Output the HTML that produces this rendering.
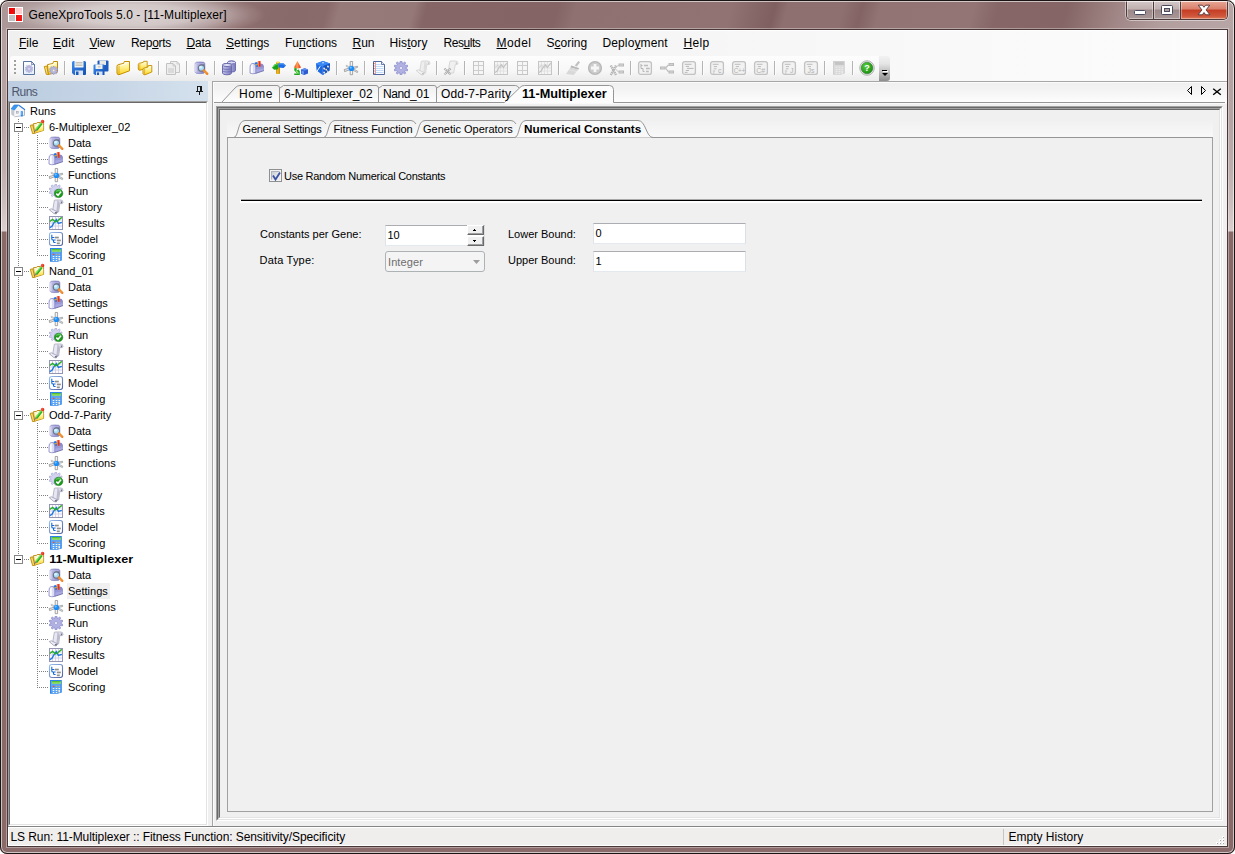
<!DOCTYPE html><html><head><meta charset="utf-8"><title>GeneXproTools 5.0 - [11-Multiplexer]</title><style>html,body{margin:0;padding:0;background:#fff;}
body{width:1235px;height:854px;overflow:hidden;position:relative;font-family:"Liberation Sans",sans-serif;}
#win{position:absolute;left:0;top:0;width:1235px;height:854px;border-radius:8px 8px 7px 7px;background:#8a6a6a;overflow:hidden;}
#win:after{content:"";position:absolute;left:0;top:0;width:1233px;height:852px;border:1px solid #1a1414;border-radius:8px 8px 7px 7px;box-shadow:inset 0 0 0 1px rgba(255,255,255,.6);z-index:9;pointer-events:none;}
#frame-top{position:absolute;left:0;top:0;width:1235px;height:30px;background:linear-gradient(105deg,#ad9999 0,#aa9696 2%,#a28c8c 13%,#947676 18.500%,#8b6c6c 21.500%,#896a6a 24%,#8a6b6b 26.5%,#967979 27.5%,#957878 33.5%,#856565 34.500%,#846464 45%,#8f7171 46.500%,#917373 59%,#7f5f5f 62.500%,#8f7070 63.500%,#8f7070 68%,#836363 69.500%,#927474 71%,#937575 78.500%,#866666 80.500%,#856565 86%,#a08585 90%,#b39e9e 94%,#b8a5a5 100%);}
#frame-left{position:absolute;left:0;top:30px;width:8px;height:816px;background:linear-gradient(180deg,#b3a0a0 0,#b6a4a4 90px,#bfaeae 140px,#cdbfbf 175px,#dccfcf 201px,#8a6969 202px,#8a6969 816px);}
#frame-right{position:absolute;left:1227px;top:30px;width:8px;height:816px;background:linear-gradient(180deg,#b3a0a0 0,#b6a4a4 90px,#bfaeae 140px,#cdbfbf 175px,#dccfcf 201px,#8a6969 202px,#8a6969 816px);}
#frame-bottom{position:absolute;left:0;top:846px;width:1235px;height:8px;background:#8a6a6a;}
#appicon{position:absolute;left:8px;top:7px;width:15px;height:15px;background:#fff;}
#appicon i{position:absolute;width:6px;height:6px;}
#appicon .a{left:1px;top:1px;background:#f00000;}
#appicon .b{left:8px;top:1px;background:#ffc8c8;}
#appicon .c{left:1px;top:8px;background:#c0c0c0;}
#appicon .d{left:8px;top:8px;background:#f00000;}
#titleglow{position:absolute;left:4px;top:-8px;width:262px;height:46px;background:radial-gradient(closest-side,rgba(255,255,255,.6) 0,rgba(255,255,255,.52) 45%,rgba(255,255,255,.3) 70%,rgba(255,255,255,.1) 88%,rgba(255,255,255,0) 100%);}
#title{position:absolute;left:28.5px;top:8px;letter-spacing:0.1px;font-size:12px;line-height:15px;color:#000;white-space:nowrap;}
#capbtns{position:absolute;left:1126px;top:1px;width:102px;height:19px;border:1px solid #4d3a3a;border-top:none;border-radius:0 0 5px 5px;box-sizing:border-box;box-shadow:0 0 0 1px rgba(255,255,255,.45);overflow:hidden;}
.cb{position:absolute;top:0;height:18px;box-sizing:border-box;}
.cb.min{left:0;width:27px;background:linear-gradient(180deg,#d4c8c8 0,#c0b0b0 45%,#9c8888 50%,#a99797 100%);border-right:1px solid #4d3a3a;box-shadow:inset 0 0 0 1px rgba(255,255,255,.4);}
.cb.max{left:27px;width:27px;background:linear-gradient(180deg,#d4c8c8 0,#c0b0b0 45%,#9c8888 50%,#a99797 100%);border-right:1px solid #4d3a3a;box-shadow:inset 0 0 0 1px rgba(255,255,255,.4);}
.cb.cls{left:54px;width:46px;background:linear-gradient(180deg,#e8a896 0,#d9806c 45%,#c43c24 50%,#d0583c 85%,#e08060 100%);box-shadow:inset 0 0 0 1px rgba(255,255,255,.35);}
.cb.min i{position:absolute;left:7px;top:9px;width:12px;height:5px;background:#fff;border:1px solid #4a4a5e;box-sizing:border-box;border-radius:1.5px;}
.cb.max i{position:absolute;left:7px;top:4px;width:12px;height:10px;border:1px solid #4a4a5e;box-sizing:border-box;background:#fff;border-radius:1.5px;}
.cb.max i:after{content:"";position:absolute;left:2px;top:2px;width:6px;height:4px;border:1px solid #4a4a5e;box-sizing:border-box;background:#b0a0a0;}
.cb.cls svg{position:absolute;left:15px;top:2px;}
#client{position:absolute;left:8px;top:30px;width:1219px;height:816px;background:#f0f0f0;box-shadow:0 0 0 1px #4a3838,0 0 0 2px rgba(255,255,255,.35);}
#menubar{position:absolute;left:8px;top:30px;width:1219px;height:51px;background:linear-gradient(90deg,#f0f0f0 0,#f1f1f1 20%,#fcfcfc 100%);box-shadow:inset 0 1px 0 #fff,inset 1px 0 0 #fff,inset -1px 0 0 #fff;}
.mi{position:absolute;top:36px;font-size:12px;line-height:15px;color:#000;white-space:nowrap;}
.mi u{text-decoration:underline;}
#tbbg{position:absolute;left:10px;top:56px;width:869px;height:25px;background:linear-gradient(180deg,#fdfdfd 0,#f7f7f7 60%,#ebebeb 100%);border-radius:3px 0 0 0;}
#grip{position:absolute;left:14px;top:60px;width:2px;height:14px;background:repeating-linear-gradient(180deg,#a0a0a0 0,#a0a0a0 2px,transparent 2px,transparent 4px);}
.ti{position:absolute;top:60px;overflow:visible;}
.sep{position:absolute;top:61px;width:1px;height:14px;background:#b4b4b4;box-shadow:1px 0 0 #fdfdfd;}
#tbover{position:absolute;left:879px;top:56px;width:11px;height:25px;background:linear-gradient(180deg,#f2f2f2 0,#e6e6e6 30%,#bdbdbd 65%,#8e8e8e 100%);border-radius:0 3px 3px 0;}
#tbover i{position:absolute;left:3px;top:14px;width:5px;height:1px;background:#000;box-shadow:1px 1px 0 #fff;}
#tbover b{position:absolute;left:3px;top:17px;width:0;height:0;border-left:3px solid transparent;border-right:3px solid transparent;border-top:3px solid #000;}
#runshdr{position:absolute;left:8px;top:81px;width:200px;height:21px;background:linear-gradient(90deg,#bccde1 0,#c6d5e6 50%,#d5e1ed 100%);}
#runshdr span{position:absolute;left:3.5px;top:4px;letter-spacing:-0.6px;font-size:12px;line-height:15px;color:#4e566c;}
#pin{position:absolute;left:188px;top:5px;}
#tree{position:absolute;left:8px;top:101px;width:200px;height:725px;box-sizing:border-box;border:1px solid;border-color:#a0a0a0 #fff #fff #a0a0a0;background:#fff;overflow:hidden;font-size:11px;}
#tree:before{content:"";position:absolute;left:0;top:0;right:0;bottom:0;border:1px solid;border-color:#696969 #e3e3e3 #e3e3e3 #696969;pointer-events:none;}
#treein{position:absolute;left:1px;top:1px;width:196px;height:721px;}
.tr{position:absolute;left:0px;width:190px;height:16px;}
.tr .ic{position:absolute;top:0;}
.tx{position:absolute;top:0;height:16px;line-height:16px;font-size:11px;color:#000;white-space:nowrap;padding:0 1px;}
.tx.bold{font-weight:bold;transform:scaleX(1.145);transform-origin:0 0;}
.tx.sel{background:#f0f0f0;padding-right:2px;}
.vl{position:absolute;width:1px;background:repeating-linear-gradient(180deg,#808080 0,#808080 1px,transparent 1px,transparent 2px);}
.hl{position:absolute;height:1px;background:repeating-linear-gradient(90deg,#808080 0,#808080 1px,transparent 1px,transparent 2px);}
.pm{position:absolute;left:4px;top:4px;width:9px;height:9px;box-sizing:border-box;border:1px solid #848484;background:#fff;}
.pm b{position:absolute;left:1px;top:3px;width:5px;height:1px;background:#000;}
#status{position:absolute;left:8px;top:826px;width:1219px;height:20px;background:#f0eded;border-top:1px solid #858585;border-bottom:1px solid #fff;box-sizing:border-box;box-shadow:inset 0 1px 0 #fff,inset 1px 0 0 #fff;}
#st1{position:absolute;left:10.5px;letter-spacing:-0.09px;top:830px;font-size:12px;line-height:15px;white-space:nowrap;}
#st2{position:absolute;left:1008.5px;top:830px;font-size:12px;line-height:15px;white-space:nowrap;}
#stsep{position:absolute;left:1003px;top:829px;width:1px;height:16px;background:#c8c4c4;}
#gripper{position:absolute;left:1214px;top:834px;}
/* mdi */
#mdi{position:absolute;left:212px;top:81px;width:1015px;height:745px;border:1px solid #a6a6a6;border-right:none;border-bottom:none;box-sizing:border-box;box-shadow:inset 1px 1px 0 #fbfbfb;background:linear-gradient(180deg,#efefef 0,#f2f2f2 6px,#fdfdfd 20px,#fdfdfd 21px,#f0f0f0 22px);}
#mdisunk{position:absolute;left:216px;top:106px;width:1007px;height:715px;box-sizing:border-box;border:1px solid;border-color:#a0a0a0 #fff #fff #a0a0a0;background:#f0f0f0;}
#mdisunk:before{content:"";position:absolute;left:0;top:0;right:0;bottom:0;border:1px solid;border-color:#696969 #e3e3e3 #e3e3e3 #696969;}
#mdisunk:after{content:"";position:absolute;left:1px;top:1px;right:1px;bottom:1px;border:1px solid;border-color:#a0a0a0 #fff #fff #a0a0a0;}
#mdisunk i{position:absolute;left:2px;top:2px;right:2px;bottom:2px;border:1px solid;border-color:#696969 #e3e3e3 #e3e3e3 #696969;}
#tabsvg1{position:absolute;left:212px;top:82px;}
.ot{position:absolute;top:87px;font-size:12px;line-height:15px;white-space:nowrap;color:#000;}
.ot.b{font-weight:bold;}
#navs{position:absolute;left:1185px;top:84px;}
#itabbg{position:absolute;left:227px;top:119px;width:986px;height:19px;background:linear-gradient(180deg,#f0f0f0 0,#f9f9f9 100%);}
#itab{position:absolute;left:227px;top:137px;width:986px;height:675px;box-sizing:border-box;border:1px solid #a0a0a0;background:#f0f0f0;}
#tabsvg2{position:absolute;left:227px;top:118px;}
.it{position:absolute;top:122px;font-size:11px;line-height:15px;white-space:nowrap;color:#000;}
.it.b{font-weight:bold;}
.lb{position:absolute;font-size:11px;line-height:13px;white-space:nowrap;color:#000;}
#chk{position:absolute;left:269px;top:169px;width:13px;height:13px;box-sizing:border-box;border:1px solid #8e8f8f;background:#f4f4f4;}
#chk:before{content:"";position:absolute;left:1px;top:1px;width:9px;height:9px;box-sizing:border-box;border:1px solid;border-color:#aeb3b9 #e9e9ea #e9e9ea #aeb3b9;background:linear-gradient(135deg,#cbcfd5 0,#f6f6f6 100%);}
#chk svg{position:absolute;left:1px;top:1px;}
#hr{position:absolute;left:241px;top:199px;width:961px;height:3px;background:linear-gradient(180deg,#a8a8a8 0,#a8a8a8 1px,#000 1px,#000 2px,#fff 2px,#fff 3px);box-shadow:-1px 1px 0 #fff;}
.tb{position:absolute;box-sizing:border-box;border:1px solid;border-color:#abadb3 #dbdfe6 #e3e9ef #e2e3ea;background:#fff;font-size:11px;}
.tb span{position:absolute;left:1.5px;top:3px;line-height:13px;}
#cmb{position:absolute;left:385px;top:251px;width:100px;height:21px;box-sizing:border-box;border:1px solid #adb2b5;border-radius:3px;background:#f4f4f4;font-size:11px;color:#6d6d6d;}
#cmb span{position:absolute;left:2px;top:4px;letter-spacing:0.1px;line-height:13px;}
#cmb svg{position:absolute;left:87px;top:8px;}
.spb{position:absolute;left:467px;width:17px;height:10px;box-sizing:border-box;border:1px solid;border-color:#fff #696969 #696969 #fff;background:#f0f0f0;box-shadow:inset -1px -1px 0 #a0a0a0;}
.spb svg{position:absolute;left:5px;top:3px;}
</style></head><body>
<svg width="0" height="0" style="position:absolute">
<defs>
<linearGradient id="gFold" x1="0" y1="0" x2="1" y2="1"><stop offset="0" stop-color="#fff6a8"/><stop offset="1" stop-color="#f2c83a"/></linearGradient>
<linearGradient id="gLav" x1="0" y1="0" x2="1" y2="0"><stop offset="0" stop-color="#c4c4ec"/><stop offset=".5" stop-color="#a0a0d8"/><stop offset="1" stop-color="#7878bc"/></linearGradient>
<linearGradient id="gLavV" x1="0" y1="0" x2="0" y2="1"><stop offset="0" stop-color="#e0e0f8"/><stop offset="1" stop-color="#8c8cc8"/></linearGradient>
<linearGradient id="gBlue" x1="0" y1="0" x2="1" y2="1"><stop offset="0" stop-color="#3c8cf0"/><stop offset="1" stop-color="#1450b0"/></linearGradient>
<radialGradient id="gHelp" cx=".4" cy=".35" r=".7"><stop offset="0" stop-color="#5cd040"/><stop offset="1" stop-color="#188a10"/></radialGradient>
<linearGradient id="gGray" x1="0" y1="0" x2="1" y2="1"><stop offset="0" stop-color="#e4e4e4"/><stop offset="1" stop-color="#bdbdbd"/></linearGradient>
<linearGradient id="gFoldV" x1="0" y1="0" x2="0" y2="1"><stop offset="0" stop-color="#fffde8"/><stop offset=".45" stop-color="#fff08c"/><stop offset="1" stop-color="#ffd21c"/></linearGradient>
<linearGradient id="gPost" x1="0" y1="0" x2="1" y2="0"><stop offset="0" stop-color="#c88c08"/><stop offset=".45" stop-color="#f0c028"/><stop offset="1" stop-color="#c08408"/></linearGradient><linearGradient id="gCone" x1="0" y1="0" x2="1" y2="0"><stop offset="0" stop-color="#e84020"/><stop offset=".45" stop-color="#ffa050"/><stop offset="1" stop-color="#e02810"/></linearGradient>
</defs>
<symbol id="g-gear" viewBox="0 0 14 14"><path d="M5.98 1.90 L6.26 0.04 L7.74 0.04 L8.02 1.90 L9.17 2.27 L10.49 0.93 L11.69 1.80 L10.82 3.48 L11.53 4.45 L13.39 4.15 L13.85 5.55 L12.16 6.40 L12.16 7.60 L13.85 8.45 L13.39 9.85 L11.53 9.55 L10.82 10.52 L11.69 12.20 L10.49 13.07 L9.17 11.73 L8.02 12.10 L7.74 13.96 L6.26 13.96 L5.98 12.10 L4.83 11.73 L3.51 13.07 L2.31 12.20 L3.18 10.52 L2.47 9.55 L0.61 9.85 L0.15 8.45 L1.84 7.60 L1.84 6.40 L0.15 5.55 L0.61 4.15 L2.47 4.45 L3.18 3.48 L2.31 1.80 L3.51 0.93 L4.83 2.27Z M5.70 7.00A1.30 1.30 0 1 0 8.30 7.00A1.30 1.30 0 1 0 5.70 7.00Z" fill-rule="evenodd" stroke-linejoin="round"/></symbol>
<symbol id="i-newrun" viewBox="0 0 16 16"><defs><linearGradient id="gPg" x1="0" y1="0" x2="0" y2="1"><stop offset="0" stop-color="#ffffff"/><stop offset="1" stop-color="#e4f0fa"/></linearGradient></defs><path d="M2.500 1.500H10.500L13.500 4.500V14.500H2.500Z" fill="url(#gPg)" stroke="#5a74a4"/><path d="M10.500 1.500V4.500H13.500Z" fill="#5a74a4" stroke="#5a74a4" stroke-width=".6"/><circle cx="11.300" cy="3.600" r=".6" fill="#fff"/><use href="#g-gear" x="4" y="4.700" width="8.200" height="8.200" fill="#b8b8e0" stroke="#a4a4d4" stroke-width=".6"/><circle cx="8.100" cy="8.800" r=".9" fill="#e0e0f4"/></symbol>
<symbol id="i-openrun" viewBox="0 0 16 16"><path d="M4.500 4.600L10 3.500L10.500 1.500H14.500V12L5.200 14.500Z" fill="url(#gFoldV)" stroke="#c08a00" stroke-width="1"/><path d="M1.300 6.500L3.800 6L5.300 14.500L3.300 14.300Z" fill="#fbe27a" stroke="#c08a00" stroke-width=".9"/><path d="M5.500 5.500L10.800 4.400L11.300 2.500H13.500" stroke="#fffef0" stroke-width=".8" fill="none"/><use href="#g-gear" x="6.200" y="6" width="8.800" height="8.800" fill="#b4b4e0" stroke="#8686c4" stroke-width=".7"/><circle cx="10.600" cy="10.400" r="1" fill="#f4f0c0"/></symbol>
<symbol id="i-save" viewBox="0 0 16 16"><path d="M1 2.500q0-1.500 1.500-1.500h11q1.500 0 1.500 1.500v11.500q0 1-1 1h-11l-2-2z" fill="url(#gBlue)"/><rect x="3.500" y="1" width="9" height="6.500" fill="#f4f4f0"/><path d="M4.500 2.500h7M4.500 4h7M4.500 5.500h7" stroke="#b8b8b0" stroke-width=".8"/><rect x="4" y="10.500" width="8" height="4.500" fill="#d8e4f4"/><rect x="5" y="11.500" width="2.500" height="3.500" fill="#1c58b8"/></symbol>
<symbol id="i-saveall" viewBox="0 0 16 16"><path d="M4.500 1.500q0-1 1-1h9q1 0 1 1v9q0 1-1 1h-10z" fill="#1c5cc0"/><rect x="6.500" y=".5" width="6.500" height="4.500" fill="#e8e8e4"/><path d="M.5 5.500q0-1 1-1h9q1 0 1 1v9.500h-9.500l-1.500-1.500z" fill="url(#gBlue)"/><rect x="2.500" y="4.500" width="7" height="4.500" fill="#f0f0ec"/><rect x="5" y="6" width="2.500" height="1.500" fill="#c8c8c8"/><rect x="3" y="11.500" width="6.500" height="3.500" fill="#d8e4f4"/><rect x="4" y="12.500" width="2" height="2.500" fill="#1c58b8"/></symbol>
<symbol id="i-foldery" viewBox="0 0 16 16"><path d="M2 6.200Q2 5 3.200 4.700L8.800 3.300L9.300 1.500H14.500V10.800L4 14.700Q2.200 14.900 2 13Z" fill="url(#gFoldV)" stroke="#c48c00" stroke-width="1"/><path d="M4 5.500V14" stroke="#d8a010" stroke-width=".8"/><path d="M4.800 5.600L9.500 4.300L10 2.500H13.500" stroke="#fffef4" stroke-width=".8" fill="none"/></symbol>
<symbol id="i-folders" viewBox="0 0 16 16"><path d="M1.300 4.500Q1.300 3.500 2.300 3.300L6.300 2.300L6.700 1.300H10.200V7.800L3 10.300Q1.500 10.300 1.300 9Z" fill="url(#gFoldV)" stroke="#c48c00" stroke-width=".9"/><path d="M2.800 4V10" stroke="#d8a010" stroke-width=".7"/><path d="M6 9.300Q6 8.300 7 8.100L11 7L11.400 5.500H14.800V12L8 14.800Q6.200 14.800 6 13.500Z" fill="url(#gFoldV)" stroke="#c48c00" stroke-width=".9"/><path d="M7.600 8.600V14.300" stroke="#d8a010" stroke-width=".7"/></symbol>
<symbol id="i-copy-d" viewBox="0 0 16 16"><path d="M5.500 1.500H12L14.500 4V12.500H5.500Z" fill="#f0f0f0" stroke="#c6c6c6"/><path d="M12 1.500V4H14.500" fill="none" stroke="#c6c6c6" stroke-width=".8"/><path d="M1.500 3.500H8L10.500 6V14.500H1.500Z" fill="#eeeeee" stroke="#c2c2c2"/><path d="M8 3.500V6H10.500" fill="none" stroke="#c2c2c2" stroke-width=".8"/><rect x="3" y="8" width="6" height="5" fill="#dadada"/></symbol>
<symbol id="i-data" viewBox="0 0 16 16"><path d="M2.200 3.200Q2.200 2 7 2T11.800 3.200V12.300Q11.800 13.600 7 13.600T2.200 12.300Z" fill="url(#gLav)"/><path d="M2.200 3.200Q2.200 2 7 2T11.800 3.200V12.300Q11.800 13.600 7 13.600T2.200 12.300Z" fill="none" stroke="#7c7cbc" stroke-width=".7"/><path d="M2.800 3.500V12.300" stroke="#f0f0ff" stroke-width=".9"/><path d="M2.500 3.300Q7 4.600 11.500 3.300" stroke="#c8c8f0" stroke-width=".6" fill="none"/><circle cx="8.400" cy="8" r="3.100" fill="#a4dcf8" stroke="#70707c" stroke-width="1.100"/><circle cx="7.600" cy="7.200" r="1.300" fill="#dcf4ff"/><path d="M10.800 10.400L14.300 13.900" stroke="#f08828" stroke-width="2.300" stroke-linecap="round"/><path d="M11.600 11.400L12.400 10.600M12.800 12.600L13.600 11.800" stroke="#ffd890" stroke-width=".6"/></symbol>
<symbol id="i-db" viewBox="0 0 16 16"><path d="M6.500 2.500q0-1.500 4-1.500t4 1.500v8q0 1.500-4 1.500t-4-1.500z" fill="url(#gLav)" stroke="#7070b0"/><ellipse cx="10.500" cy="2.500" rx="4" ry="1.500" fill="#dcdcf6" stroke="#7070b0"/><path d="M1.500 5q0-1.500 4.500-1.500t4.500 1.500v8q0 1.800-4.500 1.800t-4.500-1.800z" fill="url(#gLav)" stroke="#6c6cac"/><ellipse cx="6" cy="5" rx="4.500" ry="1.500" fill="#e4e4fa" stroke="#6c6cac"/><path d="M1.500 8q0 1.500 4.500 1.500t4.500-1.500M1.500 10.500q0 1.500 4.500 1.500t4.500-1.500" stroke="#6c6cac" fill="none" stroke-width=".8"/></symbol>
<symbol id="i-settings" viewBox="0 0 16 16"><path d="M4.500 3.600H11.500Q15 3.600 15 7.500V10.500L5 13.700Z" fill="#8888c8"/><path d="M5.800 2.400L8.300 2L9.200 7.200H6.500Z" fill="#1c78e0"/><path d="M5.900 4.600L8.800 4.200L8.900 5.100L6.100 5.500Z" fill="#f8c818"/><path d="M8.800 1.200L11.600 .9L11.400 7.400H9.200Z" fill="#f03010"/><path d="M9.100 1.300L9.900 1.200L9.900 7.300H9.200Z" fill="#ff8868"/><path d="M6.600 6.800H15V10.600L6.600 13.400Z" fill="#9898d4"/><path d="M6.600 9.500L15 8.600V10.600L6.600 13.400Z" fill="#a8a8e0"/><path d="M1 8Q1 3.400 3.900 3.400T6.800 8V13.300L3.900 13.800L1 13.100Z" fill="#dcdcf8" stroke="#7c7cbc" stroke-width=".7"/><path d="M1.900 7.500Q2.100 4.400 3.700 4.300V13.200Q2.300 13.100 1.900 12.500Z" fill="#ffffff"/><path d="M6.800 13.300L15 10.600" stroke="#6c6cac" stroke-width=".8"/></symbol>
<symbol id="i-umb" viewBox="0 0 16 16"><rect x="5" y="1.800" width="4" height="12.300" rx="1" fill="url(#gPost)"/><ellipse cx="7" cy="2.600" rx="1.800" ry=".8" fill="#fae060"/><path d="M7.200 3.600V9.200L3.200 9.700L1 7.800L3.400 4.600Z" fill="#18a418"/><path d="M6.800 4.200L3.800 5L2.200 7.300" stroke="#60d860" stroke-width=".9" fill="none"/><path d="M7.400 3.200H12.400L15 5.500L12.600 7.900L7.400 7.400Z" fill="#1c6ce8"/><path d="M8 3.900H12.200L14 5.300" stroke="#5ca4ff" stroke-width=".9" fill="none"/></symbol>
<symbol id="i-shapes" viewBox="0 0 16 16"><path d="M4.400 .9L8 7.600Q4.500 9.300 1 7.600Z" fill="url(#gCone)"/><path d="M1.200 8.200L3.600 8L3.700 10L5.200 10.200L5.300 9L6.800 11.200V15H1.200V13.600H4.200L1.300 10.500Z" fill="#20a820"/><path d="M3 10.500L5.500 13.500" stroke="#90e880" stroke-width="1.200"/><path d="M8 9.600L11.800 8.200L15 9.400V13.600L11.200 15L8 13.800Z" fill="#2c5cd0"/><path d="M8 9.600L11.200 10.800L15 9.400L11.800 8.200Z" fill="#5c8cf0"/><path d="M8.600 10.600L10.800 11.400V14.200L8.600 13.400Z" fill="#6ca0f8"/></symbol>
<symbol id="i-dice" viewBox="0 0 16 16"><path d="M1 3.400L8 1L15 3.400L14.400 10.800L7.600 15L1.600 10.600Z" fill="#1c68e0"/><path d="M1 3.400L8 1L15 3.400L7.800 6.200Z" fill="#3888f4"/><path d="M7.800 6.200L15 3.400L14.400 10.800L7.600 15Z" fill="#1054c8"/><path d="M1 3.400L7.800 6.200L7.600 15" stroke="#4c94f8" stroke-width=".7" fill="none"/><ellipse cx="8" cy="2.700" rx="1" ry=".55" fill="#fff"/><path d="M2.300 10.800L5 6.600" stroke="#fff" stroke-width="1" stroke-linecap="round"/><g fill="#ffe8c0"><ellipse cx="9.200" cy="8.600" rx=".9" ry="1.100" transform="rotate(-25 9.200 8.600)"/><ellipse cx="13" cy="6.600" rx=".9" ry="1.100" transform="rotate(-25 13 6.600)"/><ellipse cx="11.200" cy="9.700" rx=".8" ry="1" transform="rotate(-25 11.200 9.700)"/><ellipse cx="9.200" cy="12.600" rx=".9" ry="1.100" transform="rotate(-25 9.200 12.600)"/><ellipse cx="12.800" cy="11.300" rx=".7" ry=".9" transform="rotate(-25 12.800 11.300)"/></g></symbol>
<symbol id="i-func" viewBox="0 0 16 16"><path d="M7.200 1.500H9.600V14.700H7.200Z" fill="#f4f4f4" stroke="#909090" stroke-width=".8"/><path d="M1.200 9.500L8.500 7.600L8.900 9L1.600 11.600Z" fill="#e8e8e8" stroke="#909090" stroke-width=".8"/><path d="M8 7.800L14.500 6.200L14.700 7.400L8.600 9.200Z" fill="#e8e8e8" stroke="#909090" stroke-width=".7"/><path d="M8.600 8L14.800 11.300L14.400 12.600L8 9.300Z" fill="#e8e8e8" stroke="#909090" stroke-width=".7"/><path d="M3.400 5.200L8.600 8L8 9L3 6.200Z" fill="#e8e8e8" stroke="#a0a0a0" stroke-width=".6"/><circle cx="8.400" cy="8.400" r="2.700" fill="#1e8cf8"/><circle cx="7.700" cy="7.600" r="1.100" fill="#70c0ff"/></symbol>
<symbol id="i-notepad" viewBox="0 0 16 16"><path d="M2.500 1.500H10.500L13.500 4.500V14.500H2.500Z" fill="#fbfcff" stroke="#5468a0"/><path d="M10.500 1.500V4.500H13.500" fill="#e4e8f4" stroke="#4a5a98" stroke-width=".8"/><path d="M5 4.500H9.500M5 6.500H12.500M5 8.500H12.500M5 10.500H12.500M5 12.500H12.500" stroke="#a8ccf4" stroke-width=".7"/><path d="M4.500 2V14" stroke="#f08080" stroke-width=".8"/><path d="M2 3.500H3.500M2 6H3.500M2 8.500H3.500M2 11H3.500M2 13.500H3.500" stroke="#5a4a4a" stroke-width=".8"/></symbol>
<symbol id="i-run" viewBox="0 0 16 16"><use href="#g-gear" x="1" y="1" width="14" height="14" fill="#b0b0e2" stroke="#8484c6" stroke-width=".7"/><circle cx="8" cy="8" r="1.500" fill="#f4f4fc" stroke="#8c8cc8" stroke-width=".5"/></symbol>
<symbol id="i-runok" viewBox="0 0 16 16"><use href="#g-gear" x="1" y="1" width="13.500" height="13.500" fill="#d4d4f0" stroke="#a4a4d4" stroke-width=".7"/><circle cx="10.600" cy="10.400" r="4.200" fill="#1c9c1c" stroke="#107010" stroke-width=".6"/><path d="M7.400 9.500Q10.600 7 13.800 9.500Q13 6.400 10.600 6.400T7.400 9.500Z" fill="#58c858"/><path d="M8.300 10.600L10 12.300L13 8.800" stroke="#fff" stroke-width="1.500" fill="none"/></symbol>
<symbol id="i-hist" viewBox="0 0 16 16"><path d="M6.300 1.600Q6 1 7.500 1H12.600Q15 1 15 3.200Q15 4.600 13.800 4.600H11.800L10.600 13H4.400Z" fill="#e8e8f2" stroke="#9c9cb4" stroke-width=".7"/><path d="M9.400 1.500L8.400 12.800H10.500L11.700 3Z" fill="#bcbcd0"/><path d="M12.600 2.300Q14.200 2.300 14.200 3.400Q14.200 4.400 13 4.300Z" fill="#70708c"/><path d="M1.200 10.600L3.300 9.800L9.600 12.800L8.300 14.900L6 14.600Z" fill="#eeeef6" stroke="#9090a8" stroke-width=".7"/><path d="M7 13L9.500 12.800L8.300 14.700L6.600 14.500Z" fill="#74748c"/></symbol>
<symbol id="i-hist-d" viewBox="0 0 16 16"><path d="M6.300 1.600Q6 1 7.500 1H12.600Q15 1 15 3.200Q15 4.600 13.800 4.600H11.800L10.600 13H4.400Z" fill="#eeeeee" stroke="#cccccc" stroke-width=".7"/><path d="M9.400 1.500L8.400 12.800H10.500L11.700 3Z" fill="#dedede"/><path d="M12.600 2.300Q14.200 2.300 14.200 3.400Q14.200 4.400 13 4.300Z" fill="#c8c8c8"/><path d="M1.200 10.600L3.300 9.800L9.600 12.800L8.300 14.900L6 14.600Z" fill="#f2f2f2" stroke="#c8c8c8" stroke-width=".7"/><path d="M7 13L9.500 12.800L8.300 14.700L6.600 14.500Z" fill="#c6c6c6"/></symbol>
<symbol id="i-histx-d" viewBox="0 0 16 16"><path d="M6.800 1.600Q6.500 1 8 1H12.600Q15 1 15 3.200Q15 4.600 13.800 4.600H12.300L10.600 13H5Z" fill="#f0f0f0" stroke="#cacaca" stroke-width=".7"/><path d="M12.600 2.300Q14.200 2.300 14.200 3.400Q14.200 4.400 13 4.300Z" fill="#c8c8c8"/><path d="M1.500 8.500L7.500 14.500M7.500 8.500L1.500 14.500" stroke="#b0b0b0" stroke-width="2.400" stroke-dasharray="1.200 .7"/></symbol>
<symbol id="i-grid-d" viewBox="0 0 16 16"><rect x="2.500" y="1.500" width="10" height="13" fill="#f6f6f6" stroke="#c4c4c4"/><path d="M7.500 2V14M3 5.500H12M3 10.500H12" stroke="#cecece"/></symbol>
<symbol id="i-chart-d" viewBox="0 0 16 16"><rect x="1.500" y="1.500" width="13" height="13" fill="#f4f4f4" stroke="#c6c6c6"/><path d="M4.500 2V14M7.500 2V14M10.500 2V14M2 5H14M2 8H14M2 11H14" stroke="#dedede" stroke-width=".8"/><path d="M1.800 12.600L4 11.300L6 7.600L8.400 4.600L10.400 7.500L13.800 3" stroke="#c0c0c0" stroke-width="1.100" fill="none"/><path d="M1.800 7.500L4.600 5.500L7.600 7.500L10 5.500" stroke="#cacaca" stroke-width=".9" fill="none"/></symbol>
<symbol id="i-res" viewBox="0 0 16 16"><rect x="1.500" y="1.500" width="13" height="13" fill="#fafaff" stroke="#9494b4"/><path d="M4.500 2V14M7.500 2V14M10.500 2V14M2 5H14M2 8H14M2 11H14" stroke="#d0d0e4" stroke-width=".9"/><path d="M1.800 12.600L4 11.300L6 7.600L8.400 4.600L10.400 8.500L13.800 7.400" stroke="#1c78e0" stroke-width="1.400" fill="none"/><path d="M1.800 6.500L4.600 4.500L7.600 7L10 5.500L13.800 2.400" stroke="#28b020" stroke-width="1.400" fill="none"/></symbol>
<symbol id="i-brush-d" viewBox="0 0 16 16"><path d="M13.300 1L15 2.300L11.800 6.600L9.800 5.400Z" fill="#c0c0c0"/><path d="M6.200 5.600L14 8L13.300 9.800L5.400 7.400Z" fill="#b8b8b8"/><path d="M5.400 7.400L13.300 9.800L8.600 15L1 14Z" fill="#d8d8d8"/><path d="M4 9.800L11.800 11.600" stroke="#e8e8e8" stroke-width=".8"/></symbol>
<symbol id="i-plus-d" viewBox="0 0 16 16"><circle cx="8" cy="8" r="6.400" fill="#cccccc" stroke="#b8b8b8" stroke-width="1.400"/><path d="M8 4V12M4 8H12" stroke="#f6f6f6" stroke-width="2.800"/></symbol>
<symbol id="i-xtree-d" viewBox="0 0 16 16"><path d="M1.800 5.500L7 15M7 5.500L1.800 15" stroke="#b4b4b4" stroke-width="2.400" stroke-dasharray="1.300 .6"/><path d="M6.500 8L9.500 5M6.500 9L9.500 12" stroke="#c0c0c0" stroke-width="1"/><rect x="9.500" y="3.500" width="5.500" height="3" fill="#b8b8b8"/><rect x="9.500" y="10.500" width="5.500" height="3" fill="#b8b8b8"/><rect x="10.500" y="4.300" width="3.500" height="1.400" fill="#d0d0d0"/><rect x="10.500" y="11.300" width="3.500" height="1.400" fill="#d0d0d0"/></symbol>
<symbol id="i-tree-d" viewBox="0 0 16 16"><rect x="1.600" y="1.600" width="12.800" height="12.800" rx="2.200" fill="#f2f2f2" stroke="#c2c2c2" stroke-width="1.300"/><path d="M4 4V8.500H6M4 5.500H5.500M6 8.500V11.500H7.500" stroke="#b4b4b4" stroke-width="1" fill="none"/><path d="M7 5.600H11M9 8.600H12.800M9 11.600H11.800" stroke="#bcbcbc" stroke-width="1.500"/></symbol>
<symbol id="i-model" viewBox="0 0 16 16"><defs><linearGradient id="gMod" x1="0" y1="0" x2="1" y2="1"><stop offset="0" stop-color="#9cc0f0"/><stop offset="1" stop-color="#5060a0"/></linearGradient></defs><rect x="1.500" y="1.500" width="13" height="13" rx="2.200" fill="#fff" stroke="url(#gMod)" stroke-width="1.100"/><path d="M3.800 3.800V8Q3.800 9 5 9H7.600M3.800 6.500H6.300M5.500 9V10.500Q5.500 11.500 6.500 11.500H7.600" stroke="#1468d8" stroke-width="1.100" fill="none"/><rect x="6.800" y="5.700" width="4" height="1.700" fill="#909090"/><rect x="8.800" y="8.600" width="4" height="1.700" fill="#909090"/><rect x="8.800" y="11.500" width="3" height="1.700" fill="#909090"/></symbol>
<symbol id="i-hier-d" viewBox="0 0 16 16"><rect x="1" y="6.500" width="5.500" height="3" fill="#b8b8b8"/><rect x="9.500" y="3" width="5.500" height="3" fill="#b8b8b8"/><rect x="9.500" y="10.500" width="5.500" height="3" fill="#b8b8b8"/><rect x="2" y="7.300" width="3.500" height="1.400" fill="#d0d0d0"/><rect x="10.500" y="3.800" width="3.500" height="1.400" fill="#d0d0d0"/><rect x="10.500" y="11.300" width="3.500" height="1.400" fill="#d0d0d0"/><path d="M6.500 8L9.500 4.800M6.500 8L9.500 11.800" stroke="#bcbcbc" stroke-width="1.200"/></symbol>
<symbol id="i-lines-d" viewBox="0 0 16 16"><rect x="1.600" y="1.600" width="12.800" height="12.800" rx="2.200" fill="#f2f2f2" stroke="#c2c2c2" stroke-width="1.300"/><path d="M3.800 4.300H10.500M4.800 6.400H8M6 8.400H12.500M4.800 10.500H8M3.800 12.400H6.500" stroke="#b8b8b8" stroke-width="1"/></symbol>
<symbol id="g-code" viewBox="0 0 16 16"><rect x="1.600" y="1.600" width="12.800" height="12.800" rx="2.200" fill="#f2f2f2" stroke="#c2c2c2" stroke-width="1.300"/><path d="M3.800 4.300H9.500M4.800 6.600H8M4.800 8.800H7.500M3.800 11H6.200M3.800 13H5.500" stroke="#bcbcbc" stroke-width="1"/></symbol>
<symbol id="i-cc" viewBox="0 0 16 16"><use href="#g-code"/><text x="9" y="13.300" font-size="7" font-family="Liberation Sans,sans-serif" fill="#b0b0b0">c</text></symbol>
<symbol id="i-cpp" viewBox="0 0 16 16"><rect x="1.600" y="1.600" width="12.800" height="12.800" rx="2.200" fill="#f2f2f2" stroke="#c2c2c2" stroke-width="1.300"/><path d="M3.800 4.300H9.500M4.800 6.600H8" stroke="#bcbcbc" stroke-width="1"/><text x="2.800" y="13.300" font-size="6.400" font-family="Liberation Sans,sans-serif" fill="#b0b0b0" letter-spacing="-.3">C++</text></symbol>
<symbol id="i-cs" viewBox="0 0 16 16"><rect x="1.600" y="1.600" width="12.800" height="12.800" rx="2.200" fill="#f2f2f2" stroke="#c2c2c2" stroke-width="1.300"/><path d="M3.800 4.300H9.500M4.800 6.600H8" stroke="#bcbcbc" stroke-width="1"/><text x="3.200" y="13.300" font-size="7" font-family="Liberation Sans,sans-serif" fill="#b0b0b0">C#</text></symbol>
<symbol id="i-cj" viewBox="0 0 16 16"><use href="#g-code"/><text x="9" y="13.300" font-size="7" font-family="Liberation Sans,sans-serif" fill="#b0b0b0">J</text></symbol>
<symbol id="i-cjs" viewBox="0 0 16 16"><rect x="1.600" y="1.600" width="12.800" height="12.800" rx="2.200" fill="#f2f2f2" stroke="#c2c2c2" stroke-width="1.300"/><path d="M3.800 4.300H9.500M4.800 6.600H8" stroke="#bcbcbc" stroke-width="1"/><text x="4.600" y="13.300" font-size="7" font-family="Liberation Sans,sans-serif" fill="#b0b0b0">Js</text></symbol>
<symbol id="i-calc-d" viewBox="0 0 16 16"><path d="M2 1H13.800V13.600L9.500 14.800H2Z" fill="#d0d0d0"/><rect x="3" y="2" width="9.800" height="11.600" fill="#dadada"/><rect x="3.800" y="2" width="9" height="2.900" fill="#c4c4c4"/><g fill="#ececec"><rect x="4.600" y="6.700" width="1.800" height="1.100"/><rect x="7.600" y="6.700" width="1.800" height="1.100"/><rect x="10.400" y="6.700" width="1.800" height="1.100"/><rect x="4.600" y="8.900" width="1.800" height="1.100"/><rect x="7.600" y="8.900" width="1.800" height="1.100"/><rect x="10.400" y="8.900" width="1.800" height="1.100"/><rect x="4.600" y="10.900" width="1.800" height="1.100"/><rect x="7.600" y="10.900" width="1.800" height="1.100"/><rect x="4.600" y="12.900" width="1.800" height="1.100"/><rect x="7.600" y="12.900" width="1.800" height="1.100"/><rect x="10.500" y="10.800" width="1.500" height="2.800"/></g></symbol>
<symbol id="i-score" viewBox="0 0 16 16"><path d="M2 1H13.800V13.600L9.500 14.800H2Z" fill="#2c84ec"/><rect x="3" y="2" width="9.800" height="11.600" fill="#5ca4f4"/><rect x="3.800" y="2" width="9" height="2.900" fill="#8cdc60"/><rect x="3.800" y="2" width="9" height="1.200" fill="#58c030"/><rect x="4.600" y="6.700" width="2" height="1.200" rx=".6" fill="#f04830"/><rect x="7.800" y="6.700" width="1.600" height="1.200" rx=".6" fill="#c8a880"/><rect x="10.400" y="6.700" width="1.600" height="1.200" rx=".6" fill="#c8a880"/><g fill="#fff"><rect x="4.600" y="8.900" width="1.800" height="1.100" rx=".5"/><rect x="7.600" y="8.900" width="1.800" height="1.100" rx=".5"/><rect x="10.400" y="8.900" width="1.800" height="1.100" rx=".5"/><rect x="4.600" y="10.900" width="1.800" height="1.100" rx=".5"/><rect x="7.600" y="10.900" width="1.800" height="1.100" rx=".5"/><rect x="4.600" y="12.900" width="1.800" height="1.100" rx=".5"/><rect x="7.600" y="12.900" width="1.800" height="1.100" rx=".5"/></g><rect x="10.500" y="10.800" width="1.500" height="2.800" rx=".5" fill="#f8ecd0"/></symbol>
<symbol id="i-help" viewBox="0 0 16 16"><circle cx="8" cy="8" r="7.300" fill="#e4e4e4" stroke="#a4a4a4" stroke-width=".8"/><circle cx="8" cy="8" r="5.800" fill="url(#gHelp)" stroke="#187818" stroke-width=".5"/><text x="8" y="11.200" text-anchor="middle" font-size="9" font-weight="bold" font-family="Liberation Sans,sans-serif" fill="#fff">?</text></symbol>
<symbol id="i-home" viewBox="0 0 16 16"><path d="M1.200 6.300L4.500 7.600V13.800L1.200 11.600Z" fill="#c4c8d0"/><path d="M4.500 7.500L8.900 2.600L14.600 6.800V12.400L4.500 13.800Z" fill="#f6f6f8"/><path d="M4.500 13.800L14.600 12.400" stroke="#b0b4bc" stroke-width=".8"/><path d="M14.500 6.800V12.400" stroke="#a0a4ac" stroke-width=".8"/><path d="M1 6L4.200 2H8.900L4.500 7.600L1 6.300Z" fill="#3c96f0"/><path d="M1 6L4.200 2H8.900" stroke="#2a7ad8" stroke-width=".7" fill="none"/><path d="M8.800 2.200L15 6.700" stroke="#2a78d8" stroke-width="1.100" fill="none"/><rect x="10.800" y="8.200" width="2" height="5.200" fill="#1e84ee"/><rect x="11.300" y="8.700" width=".8" height="3.500" fill="#7cc0ff"/><rect x="6" y="8" width="2.600" height="2.500" fill="#a4a8b0"/><rect x="6.600" y="8.600" width="1.400" height="1.300" fill="#d4d8e0"/></symbol>
<symbol id="i-folder" viewBox="0 0 16 16"><path d="M4.500 4.600L7.500 4.400L8.200 3.500H14.600V11.400L5.600 14.200Z" fill="#fff8d4" stroke="#b8860b" stroke-width=".9"/><path d="M5.800 6.800L14.200 6V11.200L6.300 13.600Z" fill="url(#gFoldV)"/><path d="M1.300 6.300L3.800 5.800L5.800 14.300L3.600 14.600Z" fill="#f8dc68" stroke="#b8860b" stroke-width=".9"/><path d="M6.300 10.200L11.600 3.200L13.700 4.800L8.400 11.800Z" fill="#44c434"/><path d="M6.900 10L12 3.500" stroke="#98f088" stroke-width=".8"/><path d="M7.900 11.600L13.300 4.600" stroke="#28981c" stroke-width=".7"/><path d="M11.600 3.200L12.300 2.300L14.400 3.900L13.700 4.800Z" fill="#f4f4f4"/><circle cx="13.600" cy="2.500" r="1.700" fill="#e8351c"/><circle cx="13.200" cy="2" r=".6" fill="#ff9a88"/><path d="M6.300 10.200L5.400 12.800L8.400 11.800Z" fill="#8c8474"/><path d="M5.700 12L5.400 12.800L6.300 12.500Z" fill="#403830"/></symbol>
</svg>

<div id="win">
<div id="frame-top"></div><div id="frame-left"></div><div id="frame-right"></div><div id="frame-bottom"></div>
<div id="appicon"><i class="a"></i><i class="b"></i><i class="c"></i><i class="d"></i></div>
<div id="titleglow"></div><div id="title">GeneXproTools 5.0 - [11-Multiplexer]</div>
<div id="capbtns"><div class="cb min"><i></i></div><div class="cb max"><i></i></div><div class="cb cls"><svg width="16" height="14" viewBox="0 0 16 14"><path d="M2.300 2.200H6.400L8 4.300L9.600 2.200H13.700L10.100 6.900L13.900 11.800H9.700L8 9.500L6.300 11.800H2.100L5.900 6.900Z" fill="#fff" stroke="#54343a" stroke-width=".9"/></svg></div></div>
<div id="client"></div>
<div id="menubar"></div>
<span class="mi" style="left:19px;letter-spacing:0px"><u>F</u>ile</span>
<span class="mi" style="left:53px;letter-spacing:0.25px"><u>E</u>dit</span>
<span class="mi" style="left:89.5px;letter-spacing:-0.2px"><u>V</u>iew</span>
<span class="mi" style="left:131px;letter-spacing:-0.3px">Rep<u>o</u>rts</span>
<span class="mi" style="left:186.5px;letter-spacing:-0.2px"><u>D</u>ata</span>
<span class="mi" style="left:226px;letter-spacing:0px"><u>S</u>ettings</span>
<span class="mi" style="left:285px;letter-spacing:0px">Fu<u>n</u>ctions</span>
<span class="mi" style="left:352.5px;letter-spacing:0px"><u>R</u>un</span>
<span class="mi" style="left:389.5px;letter-spacing:0.1px">His<u>t</u>ory</span>
<span class="mi" style="left:443.5px;letter-spacing:-0.45px">Res<u>u</u>lts</span>
<span class="mi" style="left:496.5px;letter-spacing:0.45px"><u>M</u>odel</span>
<span class="mi" style="left:546.5px;letter-spacing:0px">S<u>c</u>oring</span>
<span class="mi" style="left:602.5px;letter-spacing:0.12px">Deplo<u>y</u>ment</span>
<span class="mi" style="left:683.5px;letter-spacing:0.3px"><u>H</u>elp</span>
<div id="tbbg"></div><div id="grip"></div>
<svg class="ti" style="left:21px" width="16" height="16"><use href="#i-newrun"/></svg>
<svg class="ti" style="left:43px" width="16" height="16"><use href="#i-openrun"/></svg>
<i class="sep" style="left:64px"></i>
<svg class="ti" style="left:71px" width="16" height="16"><use href="#i-save"/></svg>
<svg class="ti" style="left:93px" width="16" height="16"><use href="#i-saveall"/></svg>
<svg class="ti" style="left:115px" width="16" height="16"><use href="#i-foldery"/></svg>
<svg class="ti" style="left:137px" width="16" height="16"><use href="#i-folders"/></svg>
<i class="sep" style="left:158px"></i>
<svg class="ti" style="left:165px" width="16" height="16"><use href="#i-copy-d"/></svg>
<i class="sep" style="left:186px"></i>
<svg class="ti" style="left:193px" width="16" height="16"><use href="#i-data"/></svg>
<i class="sep" style="left:214px"></i>
<svg class="ti" style="left:221px" width="16" height="16"><use href="#i-db"/></svg>
<i class="sep" style="left:242px"></i>
<svg class="ti" style="left:249px" width="16" height="16"><use href="#i-settings"/></svg>
<svg class="ti" style="left:271px" width="16" height="16"><use href="#i-umb"/></svg>
<svg class="ti" style="left:293px" width="16" height="16"><use href="#i-shapes"/></svg>
<svg class="ti" style="left:315px" width="16" height="16"><use href="#i-dice"/></svg>
<i class="sep" style="left:336px"></i>
<svg class="ti" style="left:343px" width="16" height="16"><use href="#i-func"/></svg>
<i class="sep" style="left:364px"></i>
<svg class="ti" style="left:371px" width="16" height="16"><use href="#i-notepad"/></svg>
<svg class="ti" style="left:393px" width="16" height="16"><use href="#i-run"/></svg>
<svg class="ti" style="left:415px" width="16" height="16"><use href="#i-hist-d"/></svg>
<i class="sep" style="left:436px"></i>
<svg class="ti" style="left:443px" width="16" height="16"><use href="#i-histx-d"/></svg>
<i class="sep" style="left:464px"></i>
<svg class="ti" style="left:471px" width="16" height="16"><use href="#i-grid-d"/></svg>
<svg class="ti" style="left:493px" width="16" height="16"><use href="#i-chart-d"/></svg>
<svg class="ti" style="left:515px" width="16" height="16"><use href="#i-grid-d"/></svg>
<svg class="ti" style="left:537px" width="16" height="16"><use href="#i-chart-d"/></svg>
<i class="sep" style="left:558px"></i>
<svg class="ti" style="left:565px" width="16" height="16"><use href="#i-brush-d"/></svg>
<svg class="ti" style="left:587px" width="16" height="16"><use href="#i-plus-d"/></svg>
<svg class="ti" style="left:609px" width="16" height="16"><use href="#i-xtree-d"/></svg>
<i class="sep" style="left:630px"></i>
<svg class="ti" style="left:637px" width="16" height="16"><use href="#i-tree-d"/></svg>
<svg class="ti" style="left:659px" width="16" height="16"><use href="#i-hier-d"/></svg>
<svg class="ti" style="left:681px" width="16" height="16"><use href="#i-lines-d"/></svg>
<i class="sep" style="left:702px"></i>
<svg class="ti" style="left:709px" width="16" height="16"><use href="#i-cc"/></svg>
<svg class="ti" style="left:731px" width="16" height="16"><use href="#i-cpp"/></svg>
<svg class="ti" style="left:753px" width="16" height="16"><use href="#i-cs"/></svg>
<i class="sep" style="left:774px"></i>
<svg class="ti" style="left:781px" width="16" height="16"><use href="#i-cj"/></svg>
<svg class="ti" style="left:803px" width="16" height="16"><use href="#i-cjs"/></svg>
<i class="sep" style="left:824px"></i>
<svg class="ti" style="left:831px" width="16" height="16"><use href="#i-calc-d"/></svg>
<i class="sep" style="left:852px"></i>
<svg class="ti" style="left:859px" width="16" height="16"><use href="#i-help"/></svg>
<div id="tbover"><i></i><b></b></div>
<div id="runshdr"><span>Runs</span><svg id="pin" width="7" height="9" viewBox="0 0 7 9" shape-rendering="crispEdges"><path d="M1 0h5v1h-5zM1 1h1v4h-1zM4 1h2v4h-2zM0 5h7v1h-7zM3 6h1v3h-1z" fill="#1a1a1a"/></svg></div><div id="tree"><div id="treein">
<div class="tr" style="top:0px"><svg class="ic" style="left:0px" width="16" height="16"><use href="#i-home"/></svg><span class="tx" style="left:19px">Runs</span></div>
<div class="tr" style="top:16px"><i class="hl" style="left:14px;top:8px;width:5px"></i><i class="pm"><b></b></i><svg class="ic" style="left:19px" width="16" height="16"><use href="#i-folder"/></svg><span class="tx" style="left:38px">6-Multiplexer_02</span></div>
<i class="vl" style="left:8px;top:16px;height:4px"></i>
<i class="vl" style="left:8px;top:30px;height:134px"></i>
<i class="vl" style="left:27px;top:32px;height:121px"></i>
<div class="tr" style="top:32px"><i class="hl" style="left:29px;top:8px;width:9px"></i><svg class="ic" style="left:38px" width="16" height="16"><use href="#i-data"/></svg><span class="tx" style="left:57px">Data</span></div>
<div class="tr" style="top:48px"><i class="hl" style="left:29px;top:8px;width:9px"></i><svg class="ic" style="left:38px" width="16" height="16"><use href="#i-settings"/></svg><span class="tx" style="left:57px">Settings</span></div>
<div class="tr" style="top:64px"><i class="hl" style="left:29px;top:8px;width:9px"></i><svg class="ic" style="left:38px" width="16" height="16"><use href="#i-func"/></svg><span class="tx" style="left:57px">Functions</span></div>
<div class="tr" style="top:80px"><i class="hl" style="left:29px;top:8px;width:9px"></i><svg class="ic" style="left:38px" width="16" height="16"><use href="#i-runok"/></svg><span class="tx" style="left:57px">Run</span></div>
<div class="tr" style="top:96px"><i class="hl" style="left:29px;top:8px;width:9px"></i><svg class="ic" style="left:38px" width="16" height="16"><use href="#i-hist"/></svg><span class="tx" style="left:57px">History</span></div>
<div class="tr" style="top:112px"><i class="hl" style="left:29px;top:8px;width:9px"></i><svg class="ic" style="left:38px" width="16" height="16"><use href="#i-res"/></svg><span class="tx" style="left:57px">Results</span></div>
<div class="tr" style="top:128px"><i class="hl" style="left:29px;top:8px;width:9px"></i><svg class="ic" style="left:38px" width="16" height="16"><use href="#i-model"/></svg><span class="tx" style="left:57px">Model</span></div>
<div class="tr" style="top:144px"><i class="hl" style="left:29px;top:8px;width:9px"></i><svg class="ic" style="left:38px" width="16" height="16"><use href="#i-score"/></svg><span class="tx" style="left:57px">Scoring</span></div>
<div class="tr" style="top:160px"><i class="hl" style="left:14px;top:8px;width:5px"></i><i class="pm"><b></b></i><svg class="ic" style="left:19px" width="16" height="16"><use href="#i-folder"/></svg><span class="tx" style="left:38px">Nand_01</span></div>
<i class="vl" style="left:8px;top:174px;height:134px"></i>
<i class="vl" style="left:27px;top:176px;height:121px"></i>
<div class="tr" style="top:176px"><i class="hl" style="left:29px;top:8px;width:9px"></i><svg class="ic" style="left:38px" width="16" height="16"><use href="#i-data"/></svg><span class="tx" style="left:57px">Data</span></div>
<div class="tr" style="top:192px"><i class="hl" style="left:29px;top:8px;width:9px"></i><svg class="ic" style="left:38px" width="16" height="16"><use href="#i-settings"/></svg><span class="tx" style="left:57px">Settings</span></div>
<div class="tr" style="top:208px"><i class="hl" style="left:29px;top:8px;width:9px"></i><svg class="ic" style="left:38px" width="16" height="16"><use href="#i-func"/></svg><span class="tx" style="left:57px">Functions</span></div>
<div class="tr" style="top:224px"><i class="hl" style="left:29px;top:8px;width:9px"></i><svg class="ic" style="left:38px" width="16" height="16"><use href="#i-runok"/></svg><span class="tx" style="left:57px">Run</span></div>
<div class="tr" style="top:240px"><i class="hl" style="left:29px;top:8px;width:9px"></i><svg class="ic" style="left:38px" width="16" height="16"><use href="#i-hist"/></svg><span class="tx" style="left:57px">History</span></div>
<div class="tr" style="top:256px"><i class="hl" style="left:29px;top:8px;width:9px"></i><svg class="ic" style="left:38px" width="16" height="16"><use href="#i-res"/></svg><span class="tx" style="left:57px">Results</span></div>
<div class="tr" style="top:272px"><i class="hl" style="left:29px;top:8px;width:9px"></i><svg class="ic" style="left:38px" width="16" height="16"><use href="#i-model"/></svg><span class="tx" style="left:57px">Model</span></div>
<div class="tr" style="top:288px"><i class="hl" style="left:29px;top:8px;width:9px"></i><svg class="ic" style="left:38px" width="16" height="16"><use href="#i-score"/></svg><span class="tx" style="left:57px">Scoring</span></div>
<div class="tr" style="top:304px"><i class="hl" style="left:14px;top:8px;width:5px"></i><i class="pm"><b></b></i><svg class="ic" style="left:19px" width="16" height="16"><use href="#i-folder"/></svg><span class="tx" style="left:38px">Odd-7-Parity</span></div>
<i class="vl" style="left:8px;top:318px;height:134px"></i>
<i class="vl" style="left:27px;top:320px;height:121px"></i>
<div class="tr" style="top:320px"><i class="hl" style="left:29px;top:8px;width:9px"></i><svg class="ic" style="left:38px" width="16" height="16"><use href="#i-data"/></svg><span class="tx" style="left:57px">Data</span></div>
<div class="tr" style="top:336px"><i class="hl" style="left:29px;top:8px;width:9px"></i><svg class="ic" style="left:38px" width="16" height="16"><use href="#i-settings"/></svg><span class="tx" style="left:57px">Settings</span></div>
<div class="tr" style="top:352px"><i class="hl" style="left:29px;top:8px;width:9px"></i><svg class="ic" style="left:38px" width="16" height="16"><use href="#i-func"/></svg><span class="tx" style="left:57px">Functions</span></div>
<div class="tr" style="top:368px"><i class="hl" style="left:29px;top:8px;width:9px"></i><svg class="ic" style="left:38px" width="16" height="16"><use href="#i-runok"/></svg><span class="tx" style="left:57px">Run</span></div>
<div class="tr" style="top:384px"><i class="hl" style="left:29px;top:8px;width:9px"></i><svg class="ic" style="left:38px" width="16" height="16"><use href="#i-hist"/></svg><span class="tx" style="left:57px">History</span></div>
<div class="tr" style="top:400px"><i class="hl" style="left:29px;top:8px;width:9px"></i><svg class="ic" style="left:38px" width="16" height="16"><use href="#i-res"/></svg><span class="tx" style="left:57px">Results</span></div>
<div class="tr" style="top:416px"><i class="hl" style="left:29px;top:8px;width:9px"></i><svg class="ic" style="left:38px" width="16" height="16"><use href="#i-model"/></svg><span class="tx" style="left:57px">Model</span></div>
<div class="tr" style="top:432px"><i class="hl" style="left:29px;top:8px;width:9px"></i><svg class="ic" style="left:38px" width="16" height="16"><use href="#i-score"/></svg><span class="tx" style="left:57px">Scoring</span></div>
<div class="tr" style="top:448px"><i class="hl" style="left:14px;top:8px;width:5px"></i><i class="pm"><b></b></i><svg class="ic" style="left:19px" width="16" height="16"><use href="#i-folder"/></svg><span class="tx bold" style="left:38px">11-Multiplexer</span></div>
<i class="vl" style="left:27px;top:464px;height:121px"></i>
<div class="tr" style="top:464px"><i class="hl" style="left:29px;top:8px;width:9px"></i><svg class="ic" style="left:38px" width="16" height="16"><use href="#i-data"/></svg><span class="tx" style="left:57px">Data</span></div>
<div class="tr" style="top:480px"><i class="hl" style="left:29px;top:8px;width:9px"></i><svg class="ic" style="left:38px" width="16" height="16"><use href="#i-settings"/></svg><span class="tx sel" style="left:57px">Settings</span></div>
<div class="tr" style="top:496px"><i class="hl" style="left:29px;top:8px;width:9px"></i><svg class="ic" style="left:38px" width="16" height="16"><use href="#i-func"/></svg><span class="tx" style="left:57px">Functions</span></div>
<div class="tr" style="top:512px"><i class="hl" style="left:29px;top:8px;width:9px"></i><svg class="ic" style="left:38px" width="16" height="16"><use href="#i-run"/></svg><span class="tx" style="left:57px">Run</span></div>
<div class="tr" style="top:528px"><i class="hl" style="left:29px;top:8px;width:9px"></i><svg class="ic" style="left:38px" width="16" height="16"><use href="#i-hist"/></svg><span class="tx" style="left:57px">History</span></div>
<div class="tr" style="top:544px"><i class="hl" style="left:29px;top:8px;width:9px"></i><svg class="ic" style="left:38px" width="16" height="16"><use href="#i-res"/></svg><span class="tx" style="left:57px">Results</span></div>
<div class="tr" style="top:560px"><i class="hl" style="left:29px;top:8px;width:9px"></i><svg class="ic" style="left:38px" width="16" height="16"><use href="#i-model"/></svg><span class="tx" style="left:57px">Model</span></div>
<div class="tr" style="top:576px"><i class="hl" style="left:29px;top:8px;width:9px"></i><svg class="ic" style="left:38px" width="16" height="16"><use href="#i-score"/></svg><span class="tx" style="left:57px">Scoring</span></div>
</div></div>
<div id="mdi"></div>
<svg id="tabsvg1" width="1015" height="22" viewBox="0 0 1015 22" fill="none" stroke="#969696" stroke-width="1">
<path d="M292.500 20.500L308 5.500Q309.500 3.500 312.500 3.500H397.500Q401.500 3.500 401.500 7.500V20.500H1013V21.500H292.500Z" fill="#fcfcfc" stroke="none"/>
<path d="M2 20.500H9.500L23 6Q25 3.500 28 3.500H65Q67.500 3.500 67.500 6V20.500"/>
<path d="M68 6L71.500 3.500H164Q166.500 3.500 166.500 6V20.500"/>
<path d="M167 6L170.500 3.500H222Q224.500 3.500 224.500 6V20.500"/>
<path d="M225 6L228.500 3.500H303.500Q305.500 3.500 307 6"/>
<path d="M9.500 20.500H292.500L308 5.500Q309.500 3.500 312.500 3.500H397.500Q401.500 3.500 401.500 7.500V20.500H1013"/>
</svg>
<span class="ot" style="left:239px;letter-spacing:0.5px">Home</span>
<span class="ot" style="left:284px">6-Multiplexer_02</span>
<span class="ot" style="left:383px;letter-spacing:-0.4px">Nand_01</span>
<span class="ot" style="left:441px;letter-spacing:0.17px">Odd-7-Parity</span>
<span class="ot b" style="left:522px;transform:scaleX(1.058);transform-origin:0 0">11-Multiplexer</span>
<svg id="navs" width="40" height="14" viewBox="0 0 40 14"><path d="M6.500 2.500 V10.500 L2.500 6.500Z M16.500 2.500V10.500L20.500 6.500Z" fill="none" stroke="#000" stroke-width="1"/><path d="M28.200 4.800L35.800 10.800M35.800 4.800L28.200 10.800" stroke="#000" stroke-width="1.400" fill="none"/></svg>
<div id="mdisunk"><i></i></div>
<div id="itabbg"></div>
<div id="itab"></div>
<svg id="tabsvg2" width="986" height="21" viewBox="0 0 986 21" fill="none" stroke="#969696" stroke-width="1">
<path d="M287.500 19.500 C293 19.500 291 2.500 299 2.500 H411 C419 2.500 419 19.500 426 19.500Z" fill="#f9f9f9" stroke="none"/>
<path d="M0.500 20V19.500H6.500 C12 19.500 10 2.500 18 2.500 H94 Q97 2.500 99 6"/>
<path d="M96.500 19.500 C102 19.500 100 2.500 108 2.500 H184 Q187 2.500 189 6"/>
<path d="M186.500 19.500 C192 19.500 190 2.500 198 2.500 H284 Q287 2.500 289 6"/>
<path d="M6.500 19.500 H287.500 C293 19.500 291 2.500 299 2.500 H411 C419 2.500 419 19.500 426 19.500 H985"/>
</svg>
<span class="it" style="left:242.5px;letter-spacing:-0.18px">General Settings</span>
<span class="it" style="left:333.5px;letter-spacing:-0.1px">Fitness Function</span>
<span class="it" style="left:423px">Genetic Operators</span>
<span class="it b" style="left:524px;transform:scaleX(1.066);transform-origin:0 0">Numerical Constants</span>
<div id="chk"><svg width="11" height="11" viewBox="0 0 11 11"><path d="M2 4.500 L4.500 8.500 L9 1.500" stroke="#3c52a4" stroke-width="1.800" fill="none"/></svg></div>
<span class="lb" style="left:284px;top:170px;letter-spacing:-0.27px">Use Random Numerical Constants</span>
<div id="hr"></div>
<span class="lb" style="left:260px;top:228px">Constants per Gene:</span>
<span class="lb" style="left:259.5px;top:254px;letter-spacing:0.2px">Data Type:</span>
<span class="lb" style="left:508px;top:228px">Lower Bound:</span>
<span class="lb" style="left:508px;top:254px">Upper Bound:</span>
<div class="tb" style="left:385px;top:225px;width:100px;height:21px"><span>10</span></div>
<div class="spb" style="top:225px"><svg width="3" height="2" viewBox="0 0 3 2" shape-rendering="crispEdges"><path d="M1 0h1v1h1v1h-3v-1h1z" fill="#000"/></svg></div>
<div class="spb" style="top:236px"><svg width="3" height="2" viewBox="0 0 3 2" shape-rendering="crispEdges"><path d="M0 0h3v1h-1v1h-1v-1h-1z" fill="#000"/></svg></div>
<div id="cmb"><span>Integer</span><svg width="7" height="4" viewBox="0 0 7 4"><path d="M0 0H7L3.500 4Z" fill="#9c9c9c"/></svg></div>
<div class="tb" style="left:593px;top:223px;width:153px;height:21px"><span>0</span></div>
<div class="tb" style="left:593px;top:251px;width:153px;height:21px"><span>1</span></div>

<div id="status"></div><span id="st1">LS Run: 11-Multiplexer :: Fitness Function: Sensitivity/Specificity</span><i id="stsep"></i><span id="st2">Empty History</span><svg id="gripper" width="12" height="12" viewBox="0 0 12 12" shape-rendering="crispEdges"><g fill="#fff"><rect x="2" y="8" width="2" height="2"/><rect x="5" y="8" width="2" height="2"/><rect x="8" y="8" width="2" height="2"/><rect x="5" y="5" width="2" height="2"/><rect x="8" y="5" width="2" height="2"/><rect x="8" y="2" width="2" height="2"/></g><g fill="#a8a0a0"><rect x="3" y="9" width="1" height="1"/><rect x="6" y="9" width="1" height="1"/><rect x="9" y="9" width="1" height="1"/><rect x="6" y="6" width="1" height="1"/><rect x="9" y="6" width="1" height="1"/><rect x="9" y="3" width="1" height="1"/></g></svg>
</div>
</body></html>
